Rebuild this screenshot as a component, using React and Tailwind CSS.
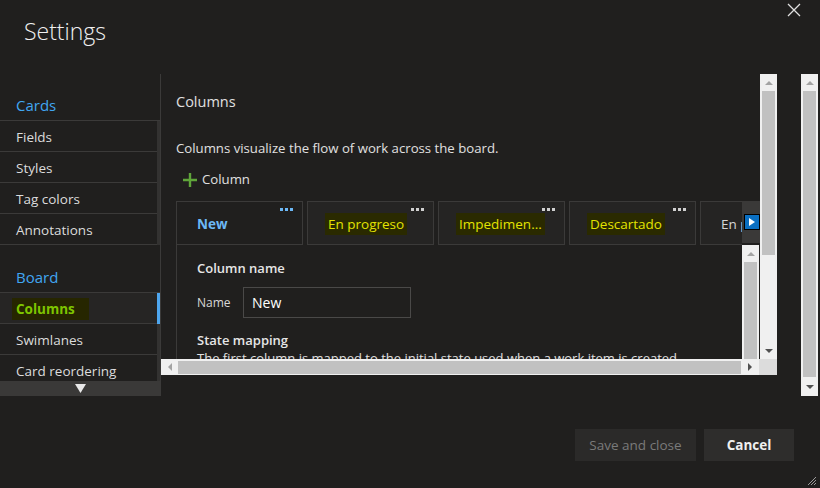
import React from "react";

const Arrow = ({ dir, dark }) => {
  const color = dark ? "#505050" : "#a3a3a3";
  const pts = {
    up: "0,4 4,0 8,4",
    down: "0,0 8,0 4,4",
    left: "4,0 4,8 0,4",
    right: "0,0 0,8 4,4",
  }[dir];
  const vertical = dir === "up" || dir === "down";
  return (
    <svg width={vertical ? 8 : 4} height={vertical ? 4 : 8} viewBox={vertical ? "0 0 8 4" : "0 0 4 8"}>
      <polygon points={pts} fill={color} />
    </svg>
  );
};

const Tab = ({ label, selected, highlight }) => (
  <div
    className={`relative shrink-0 w-[127px] h-[44px] border border-[#3b3a39] flex items-center pl-[20px] pt-[2px] ${
      selected ? "bg-[#201f1e]" : "bg-[#252423]"
    }`}
  >
    <div className="absolute top-[6px] right-[9px] flex gap-[2px]">
      {[0, 1, 2].map((i) => (
        <span key={i} className={`w-[3px] h-[3px] ${selected ? "bg-[#6cb8f6]" : "bg-[#d0d0d0]"}`} />
      ))}
    </div>
    {selected ? (
      <span className="text-[13.5px] font-bold text-[#6cb8f6]">{label}</span>
    ) : highlight ? (
      <span className="text-[13.5px] text-[#e3e300] bg-[#2a2a00] px-[3px] -ml-[3px] py-[1px] whitespace-nowrap">{label}</span>
    ) : (
      <span className="text-[13.5px] text-[#d6d6d6] whitespace-nowrap">{label}</span>
    )}
  </div>
);

const SideItem = ({ label, selected }) => (
  <div className="flex h-[31px]">
    <div
      className={`w-[157px] border-b border-[#3b3a39] flex items-center pl-[16px] pt-[2px] ${
        selected ? "bg-[#262524]" : ""
      }`}
    >
      {selected ? (
        <span className="text-[13.5px] font-bold text-[#7ec500] bg-[#262600] px-[4px] -ml-[4px] py-[1px] pr-[14px]">{label}</span>
      ) : (
        <span className="text-[13.5px] text-[#dcdcdc]">{label}</span>
      )}
    </div>
    <div className={`w-[3px] ${selected ? "bg-[#4ea6ee]" : "bg-[#333231]"}`} />
  </div>
);

export default function App() {
  return (
    <div className="relative w-[820px] h-[488px] overflow-hidden bg-[#201f1e] text-[#e6e6e6] font-['Open_Sans',sans-serif]">
      <div className="h-[74px] pl-[24px] pt-[14px]">
        <h1 className="text-[23px] font-light text-[#f0f0f0]">Settings</h1>
      </div>
      <button className="absolute top-[3px] right-[19px] w-[14px] h-[14px]">
        <svg width="14" height="14" viewBox="0 0 14 14">
          <path d="M1 1 L13 13 M13 1 L1 13" stroke="#e0e0e0" strokeWidth="1.3" />
        </svg>
      </button>

      <div className="flex">
        {/* sidebar */}
        <aside className="w-[161px] h-[322px] border-r border-[#3b3a39] flex flex-col overflow-hidden">
          <div className="h-[47px] shrink-0 border-b border-[#3b3a39] pl-[16px] pt-[19px]">
            <span className="text-[15px] text-[#40a6f2]">Cards</span>
          </div>
          <SideItem label="Fields" />
          <SideItem label="Styles" />
          <SideItem label="Tag colors" />
          <SideItem label="Annotations" />
          <div className="h-[48px] shrink-0 border-b border-[#3b3a39] pl-[16px] pt-[20px]">
            <span className="text-[15px] text-[#40a6f2]">Board</span>
          </div>
          <SideItem label="Columns" selected />
          <SideItem label="Swimlanes" />
          <div className="flex h-[26px] overflow-hidden">
            <div className="w-[157px] flex items-start pt-[6px] pl-[16px]">
              <span className="text-[13.5px] text-[#dcdcdc]">Card reordering</span>
            </div>
            <div className="w-[3px] bg-[#333231]" />
          </div>
          <div className="h-[15px] shrink-0 bg-[#3a3938] flex justify-center items-center">
            <svg width="11" height="9" viewBox="0 0 11 9">
              <polygon points="0,0 11,0 5.5,9" fill="#e8e8e8" />
            </svg>
          </div>
        </aside>

        {/* main scroll area */}
        <div className="w-[616px] flex flex-col">
          <div className="flex h-[285px]">
            <div className="w-[599px] h-[285px] overflow-hidden pl-[15px] pt-[18px]">
              <h2 className="text-[14.5px] leading-[20px] text-[#e0e0e0]">Columns</h2>
              <p className="mt-[27px] text-[13.2px] leading-[18px] text-[#e0e0e0]">
                Columns visualize the flow of work across the board.
              </p>
              <div className="mt-[12px] h-[22px] flex items-center pl-[7px] gap-[5px]">
                <svg width="14" height="14" viewBox="0 0 14 14">
                  <path d="M7 0 V14 M0 7 H14" stroke="#5fa53a" strokeWidth="2.4" />
                </svg>
                <span className="text-[13.2px] text-[#e0e0e0]">Column</span>
              </div>
              <div className="mt-[10px] flex">
                <div className="w-[566px] overflow-hidden">
                  <div className="flex gap-[4px]">
                    <Tab label="New" selected />
                    <Tab label="En progreso" highlight />
                    <Tab label="Impedimen..." highlight />
                    <Tab label="Descartado" highlight />
                    <Tab label="En progreso 2" />
                  </div>
                </div>
                <div className="w-[18px] h-[42px] bg-[#3a3938] flex items-center justify-end">
                  <div className="w-[16px] h-[16px] bg-[#0a6fc2] border border-black flex items-center justify-center">
                    <svg width="6" height="8" viewBox="0 0 6 8">
                      <polygon points="0,0 6,4 0,8" fill="#ffffff" />
                    </svg>
                  </div>
                </div>
              </div>
              <div className="flex h-[114px]">
                <div className="w-[566px] border-l border-[#3b3a39] pl-[20px] pt-[14px] overflow-hidden">
                  <div className="text-[13px] leading-[18px] font-semibold text-[#e6e6e6]">Column name</div>
                  <div className="mt-[10px] flex items-center">
                    <span className="w-[46px] text-[12px] text-[#d8d8d8]">Name</span>
                    <div className="w-[168px] h-[31px] border border-[#4a4948] flex items-center pl-[8px]">
                      <span className="text-[14px] text-white">New</span>
                    </div>
                  </div>
                  <div className="mt-[13px] text-[13px] leading-[18px] font-semibold text-[#e6e6e6]">State mapping</div>
                  <div className="text-[13px] leading-[18px] text-[#e0e0e0] whitespace-nowrap">
                    The first column is mapped to the initial state used when a work item is created.
                  </div>
                </div>
                <div className="w-[17px] h-[114px] bg-[#f0f0f0] flex flex-col items-center">
                  <div className="h-[17px] flex items-center">
                    <Arrow dir="up" />
                  </div>
                  <div className="w-[13px] flex-1 bg-[#c1c1c1]" />
                </div>
              </div>
            </div>
            <div className="w-[17px] h-[285px] bg-[#f0f0f0] flex flex-col items-center">
              <div className="h-[17px] flex items-center">
                <Arrow dir="up" />
              </div>
              <div className="w-[13px] h-[164px] bg-[#c1c1c1]" />
              <div className="flex-1" />
              <div className="h-[17px] flex items-center">
                <Arrow dir="down" dark />
              </div>
            </div>
          </div>
          <div className="flex h-[16px]">
            <div className="w-[598px] bg-[#f0f0f0] flex items-center">
              <div className="w-[17px] flex justify-center">
                <Arrow dir="left" />
              </div>
              <div className="w-[563px] h-[13px] bg-[#c1c1c1]" />
              <div className="flex-1 flex justify-center">
                <Arrow dir="right" dark />
              </div>
            </div>
            <div className="w-[18px] bg-[#dcdcdc]" />
          </div>
        </div>

        <div className="w-[24px]" />

        {/* outer scrollbar */}
        <div className="w-[17px] h-[322px] bg-[#f0f0f0] flex flex-col items-center">
          <div className="h-[17px] flex items-center">
            <Arrow dir="up" />
          </div>
          <div className="w-[13px] h-[286px] bg-[#c1c1c1]" />
          <div className="flex-1 flex items-center">
            <Arrow dir="down" dark />
          </div>
        </div>
      </div>

      <div className="mt-[33px] flex justify-end gap-[8px] pr-[26px]">
        <button className="w-[121px] h-[32px] bg-[#2b2a29] text-[13.5px] text-[#7a7a7a]">Save and close</button>
        <button className="w-[90px] h-[32px] bg-[#2e2d2c] text-[13.5px] font-bold text-[#f0f0f0]">Cancel</button>
      </div>

      <svg className="absolute right-[3px] bottom-[2px]" width="10" height="10" viewBox="0 0 10 10">
        <path d="M9 1 L1 9 M9 4 L4 9 M9 7 L7 9" stroke="#9a9a9a" strokeWidth="1" />
      </svg>
    </div>
  );
}
